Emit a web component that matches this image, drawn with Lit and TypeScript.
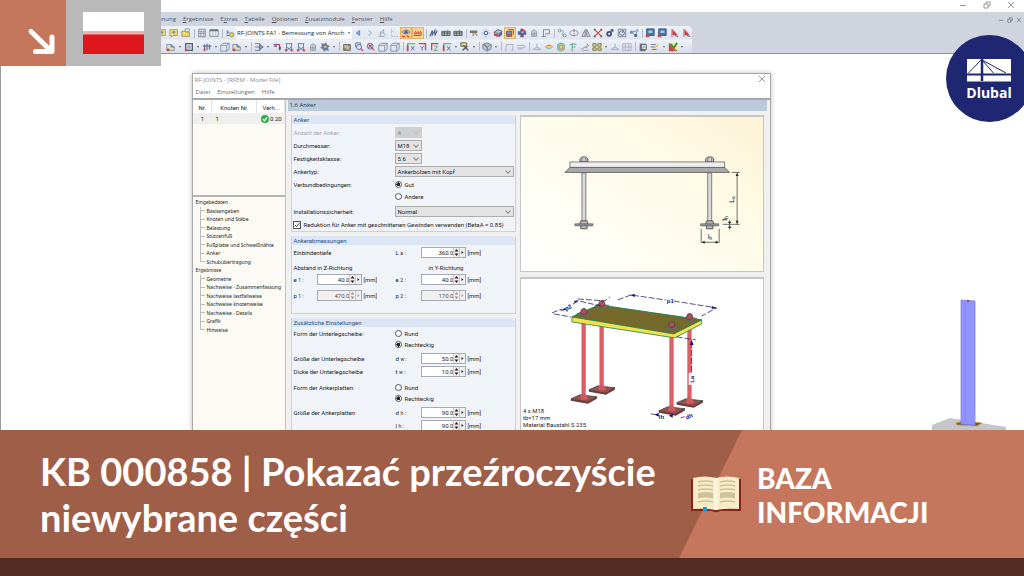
import { LitElement, html, css, svg, nothing } from "lit";
import { customElement, property } from "lit/decorators.js";

const N = "#23408c";
const G = "#707c8c";
const R = "#c9252d";

const GLYPHS: Record<string, unknown> = {
  note: svg`<path d="M1 2h9v7H5l-2 2V9H1z" fill="#f4e25a" stroke="#8a8a50"/><path d="M3 5h5M6 3v5" stroke="#667" />`,
  folder: svg`<path d="M1 4h4l1 1h4v5H1z" fill="#f3dc4a" stroke="#8b7a30"/><path d="M5 1h5v3H5z" fill="#fff" stroke="${G}"/>`,
  grid: svg`<path d="M2 1.500h8v9H2z" fill="#e4e8ee" stroke="#66707c"/><path d="M2 4h8M4.500 4v6M7.500 4v6M2 6.500h8" stroke="#66707c" stroke-width=".8"/>`,
  table: svg`<path d="M1 2h10v8H1z" fill="#f4f6f9" stroke="#66707c"/><path d="M1 3h10" stroke="#55606c" stroke-width="2"/><path d="M4.500 4v6M8 4v6" stroke="#aab"/>`,
  dots: svg`<path d="M2 2l4 3-4 3z" fill="#5b8ed0"/><circle cx="8" cy="8" r="2.500" fill="#e9cf3b" stroke="#776"/><path d="M2 9h3" stroke="${N}"/>`,
  prev: svg`<path d="M8 3L4 6l4 3z" fill="#7ba2dc" stroke="#3d69b5"/>`,
  next: svg`<path d="M4 3l4 3-4 3" fill="none" stroke="#7b8ec0"/>`,
  pin: svg`<path d="M2 10h7M4 10V5l4-3v4H4M8 6l2 3" fill="none" stroke="#8791a0"/>`,
  axes: svg`<path d="M3 1v9h8M3 4h3" fill="none" stroke="#a0a8b4" stroke-dasharray="2 1"/>`,
  eye: svg`<path d="M1 5q5-5 10 0-5 4-10 0z" fill="#e9f0fa" stroke="#4a5a70"/><circle cx="6" cy="5" r="2.200" fill="#315a9a"/><path d="M1 10h4M7 9l3 2" stroke="${R}" stroke-width="1.500"/>`,
  marks: svg`<path d="M1 9h9M2 6l1-2 1 2 2-2 1 2 2-2 1 2" fill="none" stroke="${R}"/><path d="M1 7h10" stroke="#444"/>`,
  bolt: svg`<path d="M1 10l3-7v5l3-5v6l3-6" fill="none" stroke="#48577a" stroke-width="1.500"/>`,
  beam: svg`<path d="M1 4h10v5H1z" fill="#a9b2a6" stroke="#333b45"/><path d="M1 6h10M4 4v5M8 4v5" stroke="#333b45"/><path d="M8 2v2" stroke="#2a7"/>`,
  hammer: svg`<path d="M1 3h9v3H1z" fill="#6b6454"/><path d="M5 6v4M7 6l3 3" stroke="#948468" stroke-width="1.500"/>`,
  star: svg`<path d="M6 1v10M1 6h10M3 3l6 6M9 3l-6 6" stroke="#7f95cf"/><circle cx="6" cy="6" r="2" fill="#fff" stroke="${N}"/>`,
  cubeRB: svg`<path d="M1 5l5-3 5 2-4 3z" fill="#9cc3dd" stroke="#345"/><path d="M1 6l6 2v3L1 9z" fill="${R}"/><path d="M7 7l4-3v4l-4 3z" fill="#2b58a5"/>`,
  cubeB: svg`<path d="M2 4h6v6H2z" fill="#5587c2" stroke="#274269"/><path d="M4 2h6v6" fill="none" stroke="#274269"/><path d="M3 8h4" stroke="${R}" stroke-width="1.500"/>`,
  cross: svg`<path d="M4 1h4v3h3v4H8v3H4V8H1V4h3z" fill="#30538b"/><path d="M5 3h5M3 7h6" stroke="${R}" stroke-width="1.500"/><path d="M5 5h3" stroke="#fff"/>`,
  tower: svg`<path d="M3 10V4l3-2 3 2v6z" fill="#cbd1da" stroke="#7d8795"/><path d="M3 7h6M6 4v6" stroke="#7d8795"/>`,
  flag: svg`<path d="M3 11V2h7v5H5M1 10h5" fill="none" stroke="#606a7a"/>`,
  link: svg`<circle cx="3" cy="3" r="1.700" fill="#fff" stroke="#667"/><circle cx="9" cy="9" r="1.700" fill="#fff" stroke="#667"/><path d="M4 3q5 0 3 3t1 3" fill="none" stroke="#889"/>`,
  orbit: svg`<ellipse cx="6" cy="6" rx="5" ry="3" fill="none" stroke="${G}"/><path d="M6 1v10" stroke="${R}" stroke-dasharray="1.500 1"/>`,
  mirror: svg`<path d="M5 2v8H1zM7 2v8h4z" fill="#d6dae2" stroke="#626b7a"/><path d="M6 1v10" stroke="#c66"/>`,
  xred: svg`<path d="M2 2l8 8M10 2l-8 8" stroke="${R}" stroke-width="1.300"/><path d="M1 1h2v2H1zM9 1h2v2H9zM1 9h2v2H1zM9 9h2v2H9z" fill="#444"/>`,
  gear: svg`<circle cx="5" cy="7" r="3.500" fill="#273a68"/><circle cx="8.500" cy="3" r="2" fill="#465b85"/><circle cx="5" cy="7" r="1.300" fill="#e8eefb"/>`,
  dial: svg`<path d="M1.500 1.500h9v9h-9z" fill="#d5dae3" stroke="#626b7a"/><circle cx="6" cy="6" r="2.800" fill="#f3f5fa" stroke="#263865"/><path d="M6 6l2-3" stroke="#263865"/>`,
  nodes: svg`<path d="M3 5l5 4 2-6z" fill="none" stroke="#5372a8"/><circle cx="3" cy="5" r="2" fill="#5b7bb0"/><circle cx="8" cy="9" r="2" fill="#385a94"/><circle cx="10" cy="3" r="1.500" fill="#88a1cc"/>`,
  screen: svg`<path d="M2 1h9v8H2z" fill="#2d5f94" stroke="#1e3f68"/><path d="M4 3h5v3H4z" fill="#8fc2e4"/><path d="M1 8h4v3H1z" fill="${R}"/>`,
  pdf: svg`<path d="M3 1v9M2 10h3" stroke="#a99"/><path d="M4 1l6 7-6 1z" fill="${R}"/><path d="M7 9l4 1" stroke="#555" stroke-width="1.500"/>`,
  sheet: svg`<path d="M1 3h5l4 3v4H1z" fill="#dbe6b0" stroke="#69739a"/><path d="M6 3v3h4" fill="#7fa8d8" stroke="#456"/><path d="M1 8h3v3H1z" fill="${R}"/>`,
  frame: svg`<path d="M2 2h8v8H2z" fill="none" stroke="#39434f" stroke-width="1.500"/><path d="M4 4h4v4H4z" fill="#8ea3c7"/><path d="M1 9h3v2H1z" fill="${R}"/>`,
  bars: svg`<path d="M1 5h10M3 3v6M6 2v8M9 3v6" stroke="#4d6387" stroke-width="1.500"/><path d="M2 8h2v3H2z" fill="${R}"/>`,
  cube: svg`<path d="M1 4h7v7H1zM3.500 1.500H11v7L8 11M1 4l2.500-2.500M8 4l3-2.500" fill="#e3e9f2" stroke="#5c6c88" stroke-width=".9"/>`,
  split: svg`<path d="M1 2h6v8H1M1 6h6" fill="none" stroke="#4c5666"/><path d="M7 3l4 3-4 3z" fill="#8aa6cf" stroke="#345"/>`,
  load: svg`<path d="M2 3h7v7" fill="none" stroke="${R}" stroke-width="1.500"/><path d="M2 6l3-5 1 5" fill="#446fb0"/><path d="M8 7l2 3 1-4" fill="#333"/>`,
  loads: svg`<path d="M2 2h8M3 2v8M9 2v8M3 6l6 4M9 6l-6 4" fill="none" stroke="#41639b"/><path d="M1 9h3v2H1zM8 9h3v2H8z" fill="${R}"/>`,
  cogs: svg`<path d="M2 2l3 1 2-2 1 3 3 1-2 2 1 3-3-1-2 2-1-3-3-1 2-2z" fill="#4470b4" stroke="#555"/><path d="M5 5h3v2H5z" fill="#e6cf51"/>`,
  crate: svg`<path d="M2 3h8v7H2z" fill="#8c8168" stroke="#3e3a33"/><path d="M2 3l8 7M6 3v7M2 6h8" stroke="#d8cda9"/>`,
  zoom: svg`<path d="M2 1h6v5H2z" fill="#c7d4ec" stroke="#4a5f94"/><circle cx="6" cy="6" r="3" fill="#dfe9fb" stroke="#33508b"/><path d="M8 8l3 3" stroke="${R}" stroke-width="1.500"/>`,
  zoomx: svg`<circle cx="5" cy="5" r="3.500" fill="#dfe9fb" stroke="#33508b"/><path d="M3 3l7 7M7 3L3 7" stroke="${R}" stroke-width="1.300"/>`,
  vx: svg`<path d="M2 10V2h9" fill="none" stroke="#22a14a" stroke-width="1.300"/><path d="M6 5l4 5M10 5l-4 5" stroke="${N}"/><path d="M2 4v7" stroke="${R}" stroke-width="2"/>`,
  vy: svg`<path d="M1 2h8v8" fill="none" stroke="${R}" stroke-width="1.500"/><path d="M3 5l2 2 2-2M5 7v3" fill="none" stroke="${N}"/>`,
  vz: svg`<path d="M2 10V2h8" fill="none" stroke="${R}" stroke-width="1.500"/><path d="M5 5h4l-4 5h4" fill="none" stroke="#22a14a"/>`,
  pick: svg`<path d="M1 1h7v4H1z" fill="#eedc52" stroke="#333"/><path d="M4 4l6 6M3 10l6-5" stroke="#333" stroke-width="1.500"/>`,
  globe: svg`<path d="M6 1l5 2v5l-5 3-5-3V3z" fill="#b8c4ce" stroke="#5a6773"/><path d="M1 3l5 3 5-3M6 6v5M3 2l5 8" stroke="#5a6773" fill="none"/>`,
  portal: svg`<path d="M2 10l1-7h8l-1 7M1 10h2M9 10h2" fill="none" stroke="#99a1ad"/>`,
  slab: svg`<path d="M1 4h9l1 2-7 3-2-2h6" fill="none" stroke="#99a1ad"/>`,
  tri: svg`<path d="M6 2v4L1 9M6 6l5 3M2 9h8" fill="none" stroke="#8d9dc0"/>`,
  rainbow: svg`<path d="M1 6q5-6 10 0z" fill="#e8714c"/><path d="M1 6q5 5 10 0z" fill="#52b7ac"/><path d="M3 6h6" stroke="#f0df42" stroke-width="2"/>`,
  mesh: svg`<path d="M2 3l4-2 4 2v6l-4 2-4-2z" fill="#84d3b5" stroke="#4c967c"/><path d="M4 4h4v4H4z" fill="#f0d750" stroke="#cf6b4c"/>`,
  green: svg`<path d="M5 11V3M2 4l3-2 5 1M5 6h4" fill="none" stroke="#4fa57c" stroke-width="1.300"/>`,
  iso: svg`<path d="M1 9l5-3 5-2M3 10h7M6 6l3 1" fill="none" stroke="#7b84a2"/><path d="M8 2l2 2" stroke="${R}"/>`,
  four: svg`<path d="M1 2h4v3H1zM7 2h4v3H7zM1 7h4v3H1zM7 7h4v3H7z" fill="#f2dd48" stroke="#5a5530"/>`,
  lattice: svg`<path d="M1 2h10v8H1zM1 6h10M4 2v8M8 2v8" fill="#e7eaf0" stroke="#9aa1b2"/>`,
  book: svg`<path d="M2 2h7v9H2z" fill="#565f6c"/><path d="M4 3h6v6H4z" fill="#d9e3d9" stroke="#444"/><path d="M5 8l2-3 2 2" stroke="#2a8" fill="none"/>`,
  brush: svg`<path d="M1 3h6M1 6h5M2 9h6" stroke="#4a5666"/><path d="M5 8l5-5" stroke="#e4cb38" stroke-width="2"/>`,
  color: svg`<path d="M1 1h10v10H1z" fill="#f6e94a"/><path d="M1 1v10h8z" fill="${R}"/><path d="M3 2l4 5 4-6" fill="none" stroke="#1b7a3a" stroke-width="2"/><path d="M7 8l4 3" stroke="#234"/>`,
};

const ROW_1 =
  "note note folder | grid table | dots =combo prev next pin axes *eye *marks | bolt beam beam | hammer star cubeRB *cubeB cross tower flag | link orbit mirror xred gear dial nodes | screen screen pdf pdf";
const ROW_2 =
  "sheet v frame v bars v cube sheet v | split v load loads loads tower cogs v | crate zoom zoomx cube cube | vx vy vz vx v pick v | globe v | portal slab | tri rainbow mesh green iso four v tri lattice | book brush v color v";

@customElement("tool-row")
class ToolRow extends LitElement {
  @property() items = "";

  static styles = css`
    :host { display: flex; align-items: center; height: 14px; }
    .tool { flex: none; width: 12px; height: 12px; padding: 0; border: 0; background: none; }
    .tool.on { background: #fbd088; box-shadow: inset 0 0 0 1px #e0b468; }
    .tool svg { display: block; width: 12px; height: 10px; opacity: .85; }
    .more { flex: none; width: 6px; height: 12px; padding: 0; border: 0; background: none; display: grid; place-items: center; }
    .more::after { content: ""; border: 1px solid transparent; border-top: 2px solid #59616d; border-bottom: 0; }
    .sep { flex: none; width: 1px; height: 9px; margin: 0 1px 0 2px; background: #b4bbc8; }
    .combo { flex: none; display: flex; width: 116px; height: 12px; background: #fff; }
    select { width: 100%; min-width: 0; border: 0; padding: 0 1px; appearance: none; background: none; color: #222;
      font: 6px/12px "Open Sans", sans-serif; }
  `;

  render() {
    return this.items.split(" ").map((token) => {
      if (token === "|") return html`<span class="sep"></span>`;
      if (token === "v") return html`<button class="more" aria-label="Mehr"></button>`;
      if (token === "=combo")
        return html`<span class="combo"
          ><select aria-label="Lastfall"><option>RF-JOINTS FA1 - Bemessung von Ansch</option></select
          ><button class="more" aria-label="Liste"></button></span>`;
      const on = token.startsWith("*");
      const name = on ? token.slice(1) : token;
      return html`<button class="tool ${on ? "on" : ""}" aria-label=${name}>
        <svg viewBox="0 0 12 12" fill="none">${GLYPHS[name]}</svg>
      </button>`;
    });
  }
}

const MENU = ["Berechnung", "Ergebnisse", "Extras", "Tabelle", "Optionen", "Zusatzmodule", "Fenster", "Hilfe"];
const UNDERLINED: Record<string, number> = { Ergebnisse: 0, Extras: 1, Tabelle: 0, Optionen: 0, Zusatzmodule: 0, Fenster: 0, Hilfe: 0 };

const TREE: [string, string[]][] = [
  ["Eingabedaten", ["Basisangaben", "Knoten und Stäbe", "Belastung", "Stützenfuß", "Fußplatte und Schweißnähte", "Anker", "Schubübertragung"]],
  ["Ergebnisse", ["Geometrie", "Nachweise - Zusammenfassung", "Nachweise lastfallweise", "Nachweise knotenweise", "Nachweise - Details", "Grafik", "Hinweise"]],
];

@customElement("app-root")
class AppRoot extends LitElement {
  static styles = css`
    :host { display: flex; flex-direction: column; height: 100vh; overflow: hidden; background: #fff;
      font-family: Roboto, "Liberation Sans", sans-serif; font-size: 6px; line-height: 8px; color: #222; }
    * { box-sizing: border-box; }
    button, input, select { font: inherit; color: inherit; margin: 0; }
    .stage { position: relative; flex: 1; min-height: 0; overflow: hidden; display: flex; flex-direction: column; }

    .winbar { display: flex; justify-content: flex-end; height: 12px; flex: none; padding: 1px 9px 0 0; gap: 16px; }
    .win { width: 8px; height: 8px; padding: 0; border: 0; background: none; color: #9a9a9a; }
    .win svg { display: block; width: 8px; height: 8px; }
    .chrome { flex: none; background: #d0d4de; border-bottom: 1px solid #8e9299; position: relative; }
    .menubar { display: flex; height: 14px; padding-left: 142px; gap: 7px; align-items: center; }
    .menubar a { color: #4d535c; text-decoration: none; font: 6px/12px "Open Sans", sans-serif; }
    .child { margin-left: auto; display: flex; gap: 2px; padding: 2px 1px 0 0; }
    .child .win { width: 7px; color: #777; }
    .child .win svg { width: 6px; height: 6px; }
    .bars { width: 692px; border-radius: 0 4px 4px 0; background: linear-gradient(#edf1f8, #dfe4ee 48%, #edf1f8 52%, #d9dee9); }
    .first { padding-left: 156px; }
    .second { padding-left: 165px; height: 13px; }

    .work { flex: 1; min-height: 0; padding: 19px 24.7% 0 18.7%; border-left: 1px solid #999; background: #fff; }
    .dialog { min-height: 500px; display: flex; flex-direction: column; border: 1px solid #a9a9a9; background: #f0f0f0;
      box-shadow: 0 0 5px #0004; }
    .caption { display: flex; justify-content: space-between; height: 12px; padding: 1px 4px 0 1px; background: #fff;
      color: #8c8c8c; font: 6px/10px "Open Sans", sans-serif; }
    .dmenu { display: flex; gap: 7px; height: 14px; padding: 1px 0 0 2px; background: #fff; border-bottom: 2px solid #a5a7aa; }
    .dmenu a { color: #6b6b6b; text-decoration: none; font: 6px/11px "Open Sans", sans-serif; }
    .cols { flex: 1; display: grid; grid-template-columns: 93px minmax(0, 1fr); column-gap: 2px; }

    .side { background: #fbfaf4; border-right: 1px solid #c4c4c4; display: flex; flex-direction: column; overflow: hidden;
      color: #1c1c1c; }
    .list { height: 97px; flex: none; border-bottom: 2px solid #b5b5b0; }
    table { width: 100%; border-collapse: collapse; table-layout: fixed; }
    th { height: 13px; padding: 2px 0 0; background: #fff; font-weight: 400; border-right: 1px solid #e2e2e2; }
    td { height: 11px; padding: 0 0 0 4px; background: #efefec; }
    .nr { width: 18px; }
    .ver { width: 28px; }
    td.nr { padding: 0; text-align: center; }
    .ok { display: flex; gap: 1px; align-items: center; }
    .ok svg { width: 8px; height: 8px; flex: none; }
    .tree { display: grid; grid-template-rows: 68px 68px; padding: 1px 0 0 2px; font-family: "Noto Sans", sans-serif; font-size: 5px; }
    .branch { display: grid; grid-template-rows: repeat(8, minmax(0, 1fr)); align-items: center; position: relative; margin: 0; padding: 0; list-style: none; white-space: nowrap; }
    .branch::before { content: ""; position: absolute; left: 5px; top: 9px; bottom: 4px; border-left: 1px solid #bdbdb8; }
    .branch a { color: inherit; text-decoration: none; }
    .leaf { padding-left: 11px; display: flex; align-items: center; }
    .leaf::before { content: ""; width: 5px; height: 1px; background: #bdbdb8; margin: 0 1px 0 -6px; flex: none; }

    .main { display: flex; flex-direction: column; padding: 0 3px 0 0; }
    .heading { margin: 0; height: 11px; padding-left: 1px; background: #bccbdb; color: #1d2b3c; font: 500 6px/11px "Open Sans", sans-serif; }
    .content { flex: 1; display: grid; grid-template-columns: 225px minmax(0, 1fr); column-gap: 4px; padding: 4px 3px 0; }
    .form { display: flex; flex-direction: column; gap: 4px; }
    fieldset { margin: 0; padding: 0; border: 1px solid #cbcfe2; border-width: 0 1px 1px; background: #f0f3f8; min-width: 0; }
    .gh { height: 9px; padding-left: 1px; background: #dbe5f3; border-radius: 0 4px 0 0; color: #2f5280; line-height: 10px; }
    .rows { display: flex; flex-direction: column; padding: 2px 1px 0 1px; }
    .g2 { padding: 1px 1px 11px; }
    .g3 { padding-top: 1px; }
    .row { display: grid; grid-template-columns: 24px 46px 32px 26px 46px minmax(0, 1fr); height: 13px; align-items: center; white-space: nowrap; }
    .short { height: 11px; }
    .gap-s { margin-top: 2px; }
    .gap { margin-top: 3px; }
    .gap-l { margin-top: 4px; }
    .label { grid-column: 1 / 4; }
    .dim { color: #a8a8a8; }
    .wide { grid-column: 4 / 7; }
    .small { grid-column: 4 / 6; width: 27px; }
    .iny { grid-column: 5; padding-left: 7px; }
    .sym { grid-column: 4; }
    .sym small, .symz small { font-size: 5px; }
    .pick { position: relative; display: flex; height: 11px; border: 1px solid #adadad; background: #e3e3e3; }
    .pick select { width: 100%; min-width: 0; padding: 0 1px; border: 0; background: none; appearance: none; line-height: 9px; }
    .pick::after { content: ""; flex: none; width: 3px; height: 3px; margin: 2px 3px 0 0; border: solid #888; border-width: 0 1px 1px 0; transform: rotate(45deg); }
    .off { background: #cfcfcf; border-color: #cfcfcf; color: #808080; }
    .off select { opacity: 1; }
    .off::after { opacity: .25; }
    .choice { display: flex; align-items: center; gap: 2px; }
    .check { height: 13px; white-space: nowrap; }
    input[type="radio"] { appearance: none; width: 7px; height: 7px; border: 1px solid #555; border-radius: 50%; background: #fff; }
    input[type="radio"]:checked { background: radial-gradient(#222 0 1px, #444 2px, #fff 2px); }
    .tick { display: grid; }
    .tick input { appearance: none; width: 8px; height: 8px; border: 1px solid #555; background: #fff; grid-area: 1 / 1; }
    .tick svg { width: 8px; height: 8px; grid-area: 1 / 1; pointer-events: none; }
    .spin { display: flex; width: 45px; height: 11px; border: 1px solid #a6abb5; background: #fff; }
    .spin input { flex: 1; min-width: 0; width: 0; padding: 0; border: 0; background: none; text-align: right; }
    .spin button { width: 6px; padding: 0; border: 0; border-left: 1px solid #ccc; background: #efefef; flex: none; }
    .spin svg { display: block; width: 5px; height: 9px; }
    .ro { background: #f0f0f0; color: #555; }

    .views { display: flex; flex-direction: column; gap: 5px; min-width: 0; }
    .view { border: 1px solid #c6c6c6; border-width: 2px 1px 1px; overflow: hidden; }
    .view svg { display: block; width: 100%; }
    .plan { height: 157px; background: linear-gradient(215deg, #fdf3d6 0%, #fffbe6 35%, #fffef5 70%, #fff 100%); }
    .iso { flex: 1; background: #fff; }

    .strut { position: absolute; right: 18px; bottom: 0; width: 75px; height: 132px; }
    .tags { position: absolute; left: 0; top: 0; display: flex; height: 66px; }
    .go { width: 66px; background: #c5775d; }
    .go svg { display: block; width: 66px; height: 66px; }
    .country { width: 95px; background: #b9b9b9; padding: 12px 17px 12px; }
    .country svg { display: block; width: 61px; height: 42px; }
    .logo { position: absolute; right: -9px; top: 35px; width: 87px; height: 87px; }
    .logo text { font: 700 14px "Open Sans", sans-serif; }

    .banner { flex: none; position: relative; display: flex; min-height: 128px; background: #9f5e48; color: #fff; }
    .banner::before { content: ""; position: absolute; inset: 0 0 0 auto; width: 345px; background: #c5775d;
      clip-path: polygon(63px 0, 100% 0, 100% 100%, 0 100%); }
    .title { flex: 1; margin: 0; padding: 18px 8px 0 40px; font: 700 38px/46px Lato, sans-serif; }
    .kind { position: relative; width: 333px; display: flex; gap: 16px; padding-top: 31px; }
    .kind p { margin: 0; font: 900 28px/34px Lato, sans-serif; width: 190px; }
    .kind svg { width: 50px; height: 37px; margin-top: 15px; flex: none; }
    .base { flex: none; height: 18px; background: #522c20; }
  `;

  private winIcon(kind: string) {
    const d = { min: "M1 4.500h6", max: "M1 3h4v4H1zM3 3V1h4v4H5", close: "M1 1l6 6M7 1L1 7" }[kind];
    return html`<button class="win" aria-label=${kind}>
      <svg viewBox="0 0 8 8"><path d=${d} fill="none" stroke="currentColor" /></svg>
    </button>`;
  }

  private menuItem(name: string) {
    const i = UNDERLINED[name];
    return html`<a href="#">${i === undefined ? name : html`${name.slice(0, i)}<u>${name[i]}</u>${name.slice(i + 1)}`}</a>`;
  }

  private selectRow(id: string, label: string, value: string, cls: string, extra = "", off = false) {
    return html`<div class="row ${extra}">
      <label class="label ${off ? "dim" : ""}" for=${id}>${label}</label>
      <span class="pick ${cls} ${off ? "off" : ""}"><select id=${id} ?disabled=${off}><option>${value}</option></select></span>
    </div>`;
  }

  private radioRow(name: string, text: string, checked: boolean, label = "", extra = "") {
    return html`<div class="row ${extra}">
      ${label ? html`<span class="label">${label}</span>` : nothing}
      <label class="choice wide"><input type="radio" name=${name} .checked=${checked} />${text}</label>
    </div>`;
  }

  private spin(id: string, value: string, ro = false) {
    const c = ro ? "#999" : "#222";
    return html`<span class="spin ${ro ? "ro" : ""}">
      <input id=${id} .value=${value} ?readonly=${ro} />
      <button type="button" aria-label="Wert ändern"><svg viewBox="0 0 5 9"><path d="M.5 3.500l2-2.500 2 2.500zM.5 5.500l2 2.500 2-2.500z" fill=${c} /></svg></button>
      <button type="button" aria-label="Auswahl"><svg viewBox="0 0 5 9"><path d="M1.500 3l2 1.500-2 1.500z" fill=${c} /></svg></button>
    </span>`;
  }

  private spinRow(id: string, label: string, s: string, sub: string, value: string, extra = "") {
    return html`<div class="row ${extra}">
      <label class="label" for=${id}>${label}</label>
      <label class="sym" for=${id}>${s} <small>${sub}</small> :</label>${this.spin(id, value)}<span>[mm]</span>
    </div>`;
  }

  private pairRow(s: string, a: string, b: string, extra = "", ro = false) {
    return html`<div class="row ${extra}">
      <label class="symz" for="${s}1">${s} <small>1</small> :</label>${this.spin(s + "1", a, ro)}<span>[mm]</span>
      <label class="symz" for="${s}2">${s} <small>2</small> :</label>${this.spin(s + "2", b, ro)}<span>[mm]</span>
    </div>`;
  }

  private planView() {
    const bolt = (x: number) => svg`
      <g stroke="#555" stroke-width=".7">
        <path d="M${x - 4} 45v-3l2-2h4l2 2v3z" fill="#ccc" stroke="#222"/><path d="M${x - 2} 41v4M${x + 2} 41v4"/>
        <path d="M${x - 2} 56h4v50h-4z" fill="#d8d8d8"/>
        <path d="M${x - 3} 104h6l1 2-1 6h-6l-1-6z" fill="#bbb" stroke="#222"/>
        <path d="M${x - 9} 107h18v2h-18z" fill="#999"/>
      </g>`;
    return html`<svg viewBox="0 0 242 155">
      ${bolt(63)}${bolt(189)}
      <path d="M49 45h155v6H49z" fill="#eee" stroke="#666" stroke-width=".8" />
      <path d="M49 50.500h155l5 5H44z" fill="#a9a9a9" stroke="#555" stroke-width=".8" />
      <g stroke="#333" stroke-width=".7" fill="none">
        <path d="M211 55.500h8M216.500 56v52M202 107.500h17M209 103v10M180.500 112v14M198.500 112v14M181 125.500h17" />
      </g>
      <path d="M215 59l1.500-3 1.500 3zM215 104l1.500 3 1.500-3zM207 105h4l-2 2zM207 111h4l-2-2zM184 124l-3 1.500 3 1.500zM195 124l3 1.500-3 1.500z" fill="#222" />
      <g fill="#222" font-size="7" font-family="Liberation Sans">
        <text transform="translate(213 86) rotate(-90)">L<tspan font-size="5" dy="1">a</tspan></text>
        <text transform="translate(206 104) rotate(-90)">t<tspan font-size="5" dy="1">h</tspan></text>
        <text x="187" y="122">l<tspan font-size="5" dy="1">h</tspan></text>
      </g>
    </svg>`;
  }

  private isoView() {
    const foot = (x: number, y: number, h: number) => svg`
      <path d="M${x - 2} ${y}v${h}h3.500v-${h}z" fill="#e0616a" stroke="#b94a52" stroke-width=".6"/>
      <path d="M${x - 13} ${y + h + 1}l9-4 17 2-9 6z" fill="#99504c" stroke="#2b5450" stroke-width=".8"/>
      <path d="M${x - 13} ${y + h + 1}v2l17 3 9-5v-3l-9 6z" fill="#6d3c3a"/>
      <path d="M${x - 4} ${y + h + 1}l1-4h6l1 4q-4 2-8 0z" fill="#cf5a62"/>`;
    const nut = (x: number, y: number) => svg`
      <path d="M${x - 7} ${y}l4-2 10 1.500-4 3z" fill="#a26058" stroke="#2c7568" stroke-width=".8"/>
      <path d="M${x - 3} ${y}v-3l1-2h4l1 2v3q-3 1-6 0z" fill="#ae4f56" stroke="#51312f" stroke-width=".6"/>
      <path d="M${x - 1} ${y - 6}h2v2h-2z" fill="#30776d"/>`;
    return html`<svg viewBox="0 1 242 175">
      ${foot(81, 45, 66)}${foot(63, 42, 78)}${foot(169, 45, 79)}${foot(151, 55, 77)}
      <path d="M51 39l27-12 103 15v4l-27 14-103-16z" fill="#eee34d" stroke="#277c5c" stroke-width=".8" />
      <path d="M51 39l27-12 103 15-28 14z" fill="#756a2c" stroke="#277c5c" stroke-width=".8" />
      ${nut(81, 28)}${nut(63, 36)}${nut(169, 41)}${nut(151, 49)}
      <g stroke="#26266f" stroke-width=".8" stroke-dasharray="6 2" fill="none">
        <path d="M97 22l13-5 35 5M153 23l43 7-15 8M31 35l10-4M52 26l6-3 22 5M33 36l17 3M57 21l27 2 5-4M156 59l19 3M171 64v34M130 136l6 1M160 140l4-1" />
      </g>
      <path d="M109 17l5-1v3zM196 30l-5-2v3zM58 22l-5 1 1 2zM39 33l5-3 1 2zM171 62l-2 5h4zM134 137l4-2v4zM148 138l4-2v4z" fill="#16167c" />
      <path d="M168 95h7v12h-7z" fill="#fff" />
      <g fill="#16167c" font-family="Liberation Sans" font-size="6" font-weight="700">
        <text x="146" y="25">p1</text>
        <text transform="translate(45 33) rotate(-28)">p2</text>
        <text transform="translate(173 105) rotate(-90)">La</text>
        <text x="138" y="141">lh</text>
        <text transform="translate(166 142) rotate(-25)">dh</text>
      </g>
      <g fill="#222" font-family="Roboto" font-size="6">
        <text x="2" y="135">4 x M18</text><text x="2" y="142">tb=17 mm</text><text x="2" y="149">Material Baustahl S 235</text>
      </g>
    </svg>`;
  }

  render() {
    return html`
      <main class="stage">
        <div class="winbar">${["min", "max", "close"].map((k) => this.winIcon(k))}</div>
        <header class="chrome">
          <nav class="menubar">
            ${MENU.map((m) => this.menuItem(m))}
            <span class="child">${["min", "max", "close"].map((k) => this.winIcon(k))}</span>
          </nav>
          <div class="bars">
            <tool-row class="first" .items=${ROW_1}></tool-row>
            <tool-row class="second" .items=${ROW_2}></tool-row>
          </div>
        </header>

        <div class="work">
          <section class="dialog">
            <div class="caption"><span>RF-JOINTS - [RFEM - Model File]</span>${this.winIcon("close")}</div>
            <nav class="dmenu"><a href="#">Datei</a><a href="#">Einstellungen</a><a href="#">Hilfe</a></nav>
            <div class="cols">
              <aside class="side">
                <div class="list">
                  <table>
                    <thead><tr><th class="nr">Nr.</th><th>Knoten Nr.</th><th class="ver">Verh...</th></tr></thead>
                    <tbody><tr><td class="nr">1</td><td>1</td><td><span class="ok">
                      <svg viewBox="0 0 8 8"><circle cx="4" cy="4" r="4" fill="#35a853" /><path d="M2 4l1.500 1.700L6.200 2.300" fill="none" stroke="#fff" stroke-width="1.200" /></svg>0.20</span></td></tr></tbody>
                  </table>
                </div>
                <nav class="tree">
                  ${TREE.map(([head, leaves]) => html`<ul class="branch">
                    <li>${head}</li>
                    ${leaves.map((l) => html`<li class="leaf"><a href="#">${l}</a></li>`)}
                  </ul>`)}
                </nav>
              </aside>
              <div class="main">
                <h2 class="heading">1.6 Anker</h2>
                <div class="content">
                  <form class="form">
                    <fieldset>
                      <div class="gh">Anker</div>
                      <div class="rows">
                        ${this.selectRow("count", "Anzahl der Anker:", "4", "small", "", true)}
                        ${this.selectRow("dia", "Durchmesser:", "M18", "small")}
                        ${this.selectRow("grade", "Festigkeitsklasse:", "5.6", "small")}
                        ${this.selectRow("type", "Ankertyp:", "Ankerbolzen mit Kopf", "wide")}
                        ${this.radioRow("bond", "Gut", true, "Verbundbedingungen:")}
                        ${this.radioRow("bond", "Andere", false, "", "short")}
                        ${this.selectRow("safety", "Installationssicherheit:", "Normal", "wide", "gap")}
                        <label class="choice check">
                          <span class="tick"><input type="checkbox" .checked=${true} /><svg viewBox="0 0 8 8"><path d="M2 4l1.500 1.500L6.500 2" fill="none" stroke="#333" /></svg></span>
                          Reduktion für Anker mit geschnittenen Gewinden verwenden (BetaA = 0.85)
                        </label>
                      </div>
                    </fieldset>
                    <fieldset>
                      <div class="gh">Ankerabmessungen</div>
                      <div class="rows g2">
                        ${this.spinRow("la", "Einbindentiefe", "L", "a", "360.0")}
                        <div class="row short gap"><span class="label">Abstand in Z-Richtung</span><span class="iny">in Y-Richtung</span></div>
                        ${this.pairRow("e", "40.0", "40.0")}
                        ${this.pairRow("p", "470.0", "170.0", "gap", true)}
                      </div>
                    </fieldset>
                    <fieldset>
                      <div class="gh">Zusätzliche Einstellungen</div>
                      <div class="rows g3">
                        ${this.radioRow("washer", "Rund", false, "Form der Unterlegscheibe:", "short")}
                        ${this.radioRow("washer", "Rechteckig", true, "", "short")}
                        ${this.spinRow("dw", "Größe der Unterlegscheibe", "d", "w", "50.0", "gap-s")}
                        ${this.spinRow("tw", "Dicke der Unterlegscheibe", "t", "w", "10.0")}
                        ${this.radioRow("plate", "Rund", false, "Form der Ankerplatten:", "gap-l short")}
                        ${this.radioRow("plate", "Rechteckig", true, "", "short")}
                        ${this.spinRow("dh", "Größe der Ankerplatten", "d", "h", "90.0", "gap-s")}
                        ${this.spinRow("lh", "", "l", "h", "90.0")}
                      </div>
                    </fieldset>
                  </form>
                  <div class="views">
                    <div class="view plan">${this.planView()}</div>
                    <div class="view iso">${this.isoView()}</div>
                  </div>
                </div>
              </div>
            </div>
          </section>
        </div>

        <svg class="strut" viewBox="0 0 75 132">
          <path d="M1 127l18-7 56 9v3H1z" fill="#c3c7c7" />
          <path d="M25 125l8-2 18 2-5 3-20-1z" fill="#6b5d48" stroke="#c9a13a" stroke-width=".8" />
          <path d="M30 2l14 1v124l-14-1z" fill="#9293ff" stroke="#7f80ee" stroke-width=".8" />
          <path d="M34 3v122" stroke="#8788f6" /><circle cx="37" cy="3" r="1" fill="#823" />
        </svg>

        <div class="tags">
          <div class="go"><svg viewBox="0 0 66 66"><path d="M31 31.500L51 51M52 37v14.500H35.500" fill="none" stroke="#fff" stroke-width="5" stroke-linecap="round" stroke-linejoin="round" /></svg></div>
          <div class="country"><svg viewBox="0 0 61 42"><path d="M0 0h61v19H0z" fill="#fff" /><path d="M0 19h61v4H0z" fill="#ebb0b2" /><path d="M0 22.500h61V42H0z" fill="#de171d" /></svg></div>
        </div>

        <svg class="logo" viewBox="0 0 87 87">
          <circle cx="43.500" cy="43.500" r="43.500" fill="#1f2672" />
          <path d="M21 24h44v14.500H21zM21 40.500h44v6H21z" fill="#fff" />
          <path d="M36 24v22" stroke="#1f2672" stroke-width="2.500" />
          <path d="M35 25L22.500 38M36 25l11.500 13M36 25l24 13" stroke="#1f2672" fill="none" />
          <text x="43" y="63" text-anchor="middle" fill="#fff">Dlubal</text>
        </svg>
      </main>

      <section class="banner">
        <h1 class="title">KB 000858 | Pokazać przeźroczyście niewybrane części</h1>
        <div class="kind">
          <svg viewBox="0 0 50 37">
            <path d="M0 3h50v32H29q-4 2.500-8 0H0z" fill="#8e1f1c" />
            <path d="M2 2q12-3 23 0 11-3 23 0v31q-12-1-23 1-11-2-23-1z" fill="#f7ebc8" />
            <path d="M23 1.500q2 .5 2 1t2-1v32l-2 .5-2-.5z" fill="#fdf6df" />
            <g fill="none" stroke="#cfc095" stroke-width="1.500">
              <path d="M7 6q8-2 15 0M7 10q8-2 15 0M7 14q8-2 15 0M29 6q8-2 15 0M29 10q8-2 15 0M29 14q8-2 15 0M7 26q8-2 15 0M29 26q8-2 15 0" />
            </g>
            <path d="M7 17q8-2 15 0v5.500q-8-2-15 0zM29 17q8-2 15 0v5.500q-8-2-15 0z" fill="#cfc29a" />
            <path d="M12 31h4v4.500h-4z" fill="#189bd7" />
          </svg>
          <p>BAZA INFORMACJI</p>
        </div>
      </section>
      <div class="base"></div>
    `;
  }
}
